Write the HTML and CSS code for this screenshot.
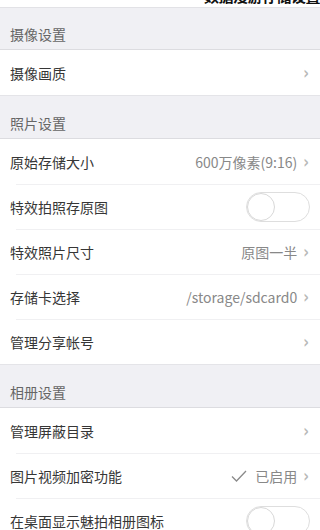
FILE: index.html
```html
<!DOCTYPE html>
<html lang="zh">
<head>
<meta charset="utf-8">
<link rel="stylesheet" href="styles.css">
</head>
<body>
<div class="page">
  <div class="topstrip"><span class="toptext">数据漫游存储设置</span></div>

  <div class="section-head first">摄像设置</div>
  <div class="group">
    <div class="row"><span class="label">摄像画质</span><span class="right"><span class="chev">›</span></span></div>
  </div>

  <div class="section-head">照片设置</div>
  <div class="group">
    <div class="row"><span class="label">原始存储大小</span><span class="right"><span class="value">600万像素(9:16)</span><span class="chev">›</span></span></div>
    <div class="row"><span class="label">特效拍照存原图</span><span class="right"><span class="switch"><span class="knob"></span></span></span></div>
    <div class="row"><span class="label">特效照片尺寸</span><span class="right"><span class="value">原图一半</span><span class="chev">›</span></span></div>
    <div class="row"><span class="label">存储卡选择</span><span class="right"><span class="value">/storage/sdcard0</span><span class="chev">›</span></span></div>
    <div class="row"><span class="label">管理分享帐号</span><span class="right"><span class="chev">›</span></span></div>
  </div>

  <div class="section-head">相册设置</div>
  <div class="group">
    <div class="row"><span class="label">管理屏蔽目录</span><span class="right"><span class="chev">›</span></span></div>
    <div class="row"><span class="label">图片视频加密功能</span><span class="right"><svg class="check" width="16" height="12" viewBox="0 0 16 12"><path d="M1 6.5 L5.5 11 L15 1" fill="none" stroke="#8a8a8a" stroke-width="1.3"/></svg><span class="value">已启用</span><span class="chev">›</span></span></div>
    <div class="row"><span class="label">在桌面显示魅拍相册图标</span><span class="right"><span class="switch"><span class="knob"></span></span></span></div>
  </div>
</div>
</body>
</html>
```
FILE: styles.css
```css
html, body {
  margin: 0;
  padding: 0;
  background: #ffffff;
}
.page {
  width: 320px;
  height: 530px;
  overflow: hidden;
  font-family: "Noto Sans CJK SC", "Noto Sans", sans-serif;
  background: #f0f0f4;
}
.topstrip {
  height: 7px;
  background: #ffffff;
  overflow: hidden;
  text-align: right;
  border-bottom: 1px solid #e2e2e6;
}
.toptext {
  display: block;
  margin-top: -13px;
  font-size: 15px;
  line-height: 18px;
  font-weight: bold;
  color: #111;
  letter-spacing: -0.5px;
}
.section-head {
  height: 43px;
  display: flex;
  align-items: flex-end;
  padding: 0 10px 5px;
  box-sizing: border-box;
  font-size: 14px;
  color: #666;
  background: #f0f0f4;
  border-bottom: 1px solid #dcdce0;
}
.section-head.first {
  height: 42px;
}
.group {
  background: #ffffff;
  border-bottom: 1px solid #e4e4e8;
}
.row {
  height: 45px;
  display: flex;
  align-items: center;
  justify-content: space-between;
  padding: 0 10px;
  box-sizing: border-box;
  position: relative;
}
.row + .row::before {
  content: "";
  position: absolute;
  top: 0;
  left: 16px;
  right: 0;
  height: 1px;
  background: #f0f0f2;
}
.label {
  font-size: 14px;
  color: #363636;
}
.right {
  display: flex;
  align-items: center;
}
.value {
  font-size: 14px;
  color: #888;
}
.check {
  margin-right: 8px;
}
.chev {
  font-size: 14px;
  font-weight: bold;
  color: #b8b8b8;
  margin-left: 6px;
  margin-right: 1px;
  font-family: "DejaVu Sans", sans-serif;
  transform: scaleY(1.2);
}
.switch {
  width: 64px;
  height: 30px;
  box-sizing: border-box;
  border: 1px solid #dedede;
  border-radius: 15px;
  position: relative;
  background: #fff;
}
.knob {
  position: absolute;
  left: 0;
  top: 0;
  width: 28px;
  height: 28px;
  box-sizing: border-box;
  border: 1px solid #d8d8d8;
  border-radius: 50%;
  background: #fff;
}
```
